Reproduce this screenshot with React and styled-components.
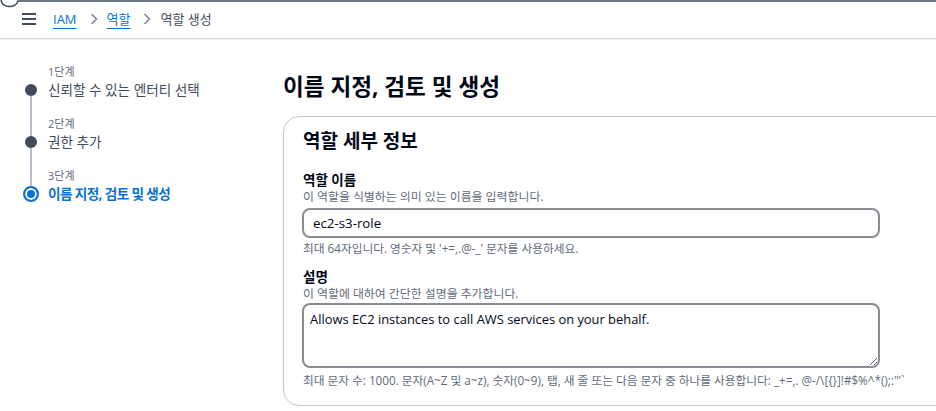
import React from 'react';
import styled, { createGlobalStyle } from 'styled-components';

const Global = createGlobalStyle`
  html, body { margin: 0; padding: 0; background: #ffffff; overflow: hidden; }
  body { font-family: "Open Sans", "Noto Sans CJK KR", sans-serif; color: #000716; }
  * { box-sizing: border-box; }
`;

const Page = styled.div`
  position: relative;
  width: 936px;
  height: 411px;
  overflow: hidden;
`;

const TopEdge = styled.svg`
  position: absolute;
  top: 0;
  left: 0;
  pointer-events: none;
`;

const Header = styled.header`
  height: 39px;
  display: flex;
  align-items: center;
  padding-left: 22px;
  border-bottom: 1px solid #d5dbdb;
  box-shadow: 0 1px 1px rgba(0, 7, 22, 0.06);
`;

const Burger = styled.svg`
  flex: none;
  margin-right: 17px;
`;

const Crumbs = styled.nav`
  display: flex;
  align-items: center;
  font-size: 13px;
  line-height: 18px;
`;

const CrumbLink = styled.a`
  color: #0972d3;
  text-decoration: underline;
  text-underline-offset: 4px;
  text-decoration-thickness: 1px;
`;

const CrumbCurrent = styled.span`
  color: #414d5c;
`;

const Sep = styled.svg`
  margin: 0 9px 0 13px;
  flex: none;
`;

const Main = styled.main`
  display: grid;
  grid-template-columns: 261px 1fr;
  padding-left: 22px;
`;

const Steps = styled.ol`
  list-style: none;
  margin: 0;
  padding: 25px 0 0;
`;

const Step = styled.li`
  display: grid;
  grid-template-columns: 18px 1fr;
  column-gap: 8px;
`;

const Rail = styled.div`
  display: flex;
  flex-direction: column;
  align-items: center;
`;

const Seg = styled.div`
  width: 2px;
  background: ${(p) => (p.$hidden ? 'transparent' : '#b6bec9')};
  height: ${(p) => (p.$grow ? 'auto' : `${p.$h}px`)};
  flex: ${(p) => (p.$grow ? '1' : 'none')};
`;

const Dot = styled.span`
  flex: none;
  width: ${(p) => (p.$active ? 16 : 12)}px;
  height: ${(p) => (p.$active ? 16 : 12)}px;
  border-radius: 50%;
  background: ${(p) => (p.$active ? '#0972d3' : '#414d5c')};
  border: ${(p) => (p.$active ? '2px solid #0972d3' : 'none')};
  box-shadow: ${(p) => (p.$active ? 'inset 0 0 0 2px #ffffff' : 'none')};
`;

const StepText = styled.div`
  padding-bottom: 16px;
`;

const StepNo = styled.div`
  font-size: 11px;
  line-height: 16px;
  color: #5f6b7a;
`;

const StepTitle = styled.div`
  font-size: 13.6px;
  line-height: 20px;
  color: ${(p) => (p.$active ? '#0972d3' : '#414d5c')};
  font-weight: ${(p) => (p.$active ? 700 : 400)};
  letter-spacing: ${(p) => (p.$active ? '-0.6px' : '0')};
`;

const Content = styled.section`
  padding-top: 33px;
`;

const Heading = styled.h1`
  margin: 0 0 14px;
  font-size: 22.6px;
  line-height: 30px;
  font-weight: 700;
  color: #000716;
`;

const Card = styled.div`
  width: 690px;
  border: 1px solid #c6c6cd;
  border-radius: 16px;
  padding: 13px 20px 17px 19px;
`;

const CardTitle = styled.h2`
  margin: 0;
  font-size: 19px;
  line-height: 22px;
  font-weight: 700;
  color: #000716;
`;

const Field = styled.div`
  margin-top: ${(p) => p.$top}px;
`;

const Label = styled.div`
  font-size: 13.5px;
  line-height: 18px;
  font-weight: 700;
  color: #000716;
`;

const Desc = styled.div`
  font-size: 11.9px;
  line-height: 15px;
  color: #5f6b7a;
`;

const Constraint = styled.div`
  margin-top: ${(p) => p.$top}px;
  font-size: 11.7px;
  line-height: 16px;
  color: #5f6b7a;
  white-space: nowrap;
`;

const TextInput = styled.input`
  display: block;
  margin: 4px 0 0 -1px;
  width: 578px;
  height: 30px;
  padding: 0 9px;
  border: 2px solid #8c8c94;
  border-radius: 8px;
  font-family: "Open Sans", "Noto Sans CJK KR", sans-serif;
  font-size: 13.3px;
  color: #000716;
  background: #fff;
  outline: none;
`;

const TextArea = styled.textarea`
  display: block;
  margin: 2px 0 0 -1px;
  width: 578px;
  height: 65px;
  padding: 6px 6px;
  border: 2px solid #8c8c94;
  border-radius: 8px;
  font-family: "Open Sans", "Noto Sans CJK KR", sans-serif;
  font-size: 12.9px;
  line-height: 17px;
  color: #000716;
  background: #fff;
  outline: none;
  resize: vertical;
`;

const steps = [
  { no: '1단계', title: '신뢰할 수 있는 엔터티 선택' },
  { no: '2단계', title: '권한 추가' },
  { no: '3단계', title: '이름 지정, 검토 및 생성', active: true },
];

function Chevron() {
  return (
    <Sep width="8" height="12" viewBox="0 0 8 12">
      <path d="M1.5 1 L6.5 6 L1.5 11" fill="none" stroke="#7d8998" strokeWidth="1.6" />
    </Sep>
  );
}

export default function App() {
  return (
    <Page>
      <Global />
      <TopEdge width="936" height="9" viewBox="0 0 936 9">
        <path d="M1 0 C 2 8, 15 9, 18 1 L 936 1" fill="none" stroke="#414d5c" strokeWidth="1.5" />
      </TopEdge>
      <Header>
        <Burger width="14" height="12" viewBox="0 0 14 12">
          <path d="M0 1 H14 M0 6 H14 M0 11 H14" stroke="#414d5c" strokeWidth="2" />
        </Burger>
        <Crumbs>
          <CrumbLink href="#">IAM</CrumbLink>
          <Chevron />
          <CrumbLink href="#">역할</CrumbLink>
          <Chevron />
          <CrumbCurrent>역할 생성</CrumbCurrent>
        </Crumbs>
      </Header>
      <Main>
        <Steps>
          {steps.map((s, i) => (
            <Step key={s.no}>
              <Rail>
                <Seg $h={s.active ? 18 : 20} $hidden={i === 0} />
                <Dot $active={s.active} />
                <Seg $grow $hidden={i === steps.length - 1} />
              </Rail>
              <StepText>
                <StepNo>{s.no}</StepNo>
                <StepTitle $active={s.active}>{s.title}</StepTitle>
              </StepText>
            </Step>
          ))}
        </Steps>
        <Content>
          <Heading>이름 지정, 검토 및 생성</Heading>
          <Card>
            <CardTitle>역할 세부 정보</CardTitle>
            <Field $top={19}>
              <Label>역할 이름</Label>
              <Desc>이 역할을 식별하는 의미 있는 이름을 입력합니다.</Desc>
              <TextInput defaultValue="ec2-s3-role" />
              <Constraint $top={2}>최대 64자입니다. 영숫자 및 '+=,.@-_' 문자를 사용하세요.</Constraint>
            </Field>
            <Field $top={12}>
              <Label>설명</Label>
              <Desc>이 역할에 대하여 간단한 설명을 추가합니다.</Desc>
              <TextArea defaultValue="Allows EC2 instances to call AWS services on your behalf." />
              <Constraint $top={4}>
                최대 문자 수: 1000. 문자(A~Z 및 a~z), 숫자(0~9), 탭, 새 줄 또는 다음 문자 중 하나를 사용합니다: _+=,. @-/\[{'{}'}]!#$%^*();:"'`
              </Constraint>
            </Field>
          </Card>
        </Content>
      </Main>
    </Page>
  );
}
